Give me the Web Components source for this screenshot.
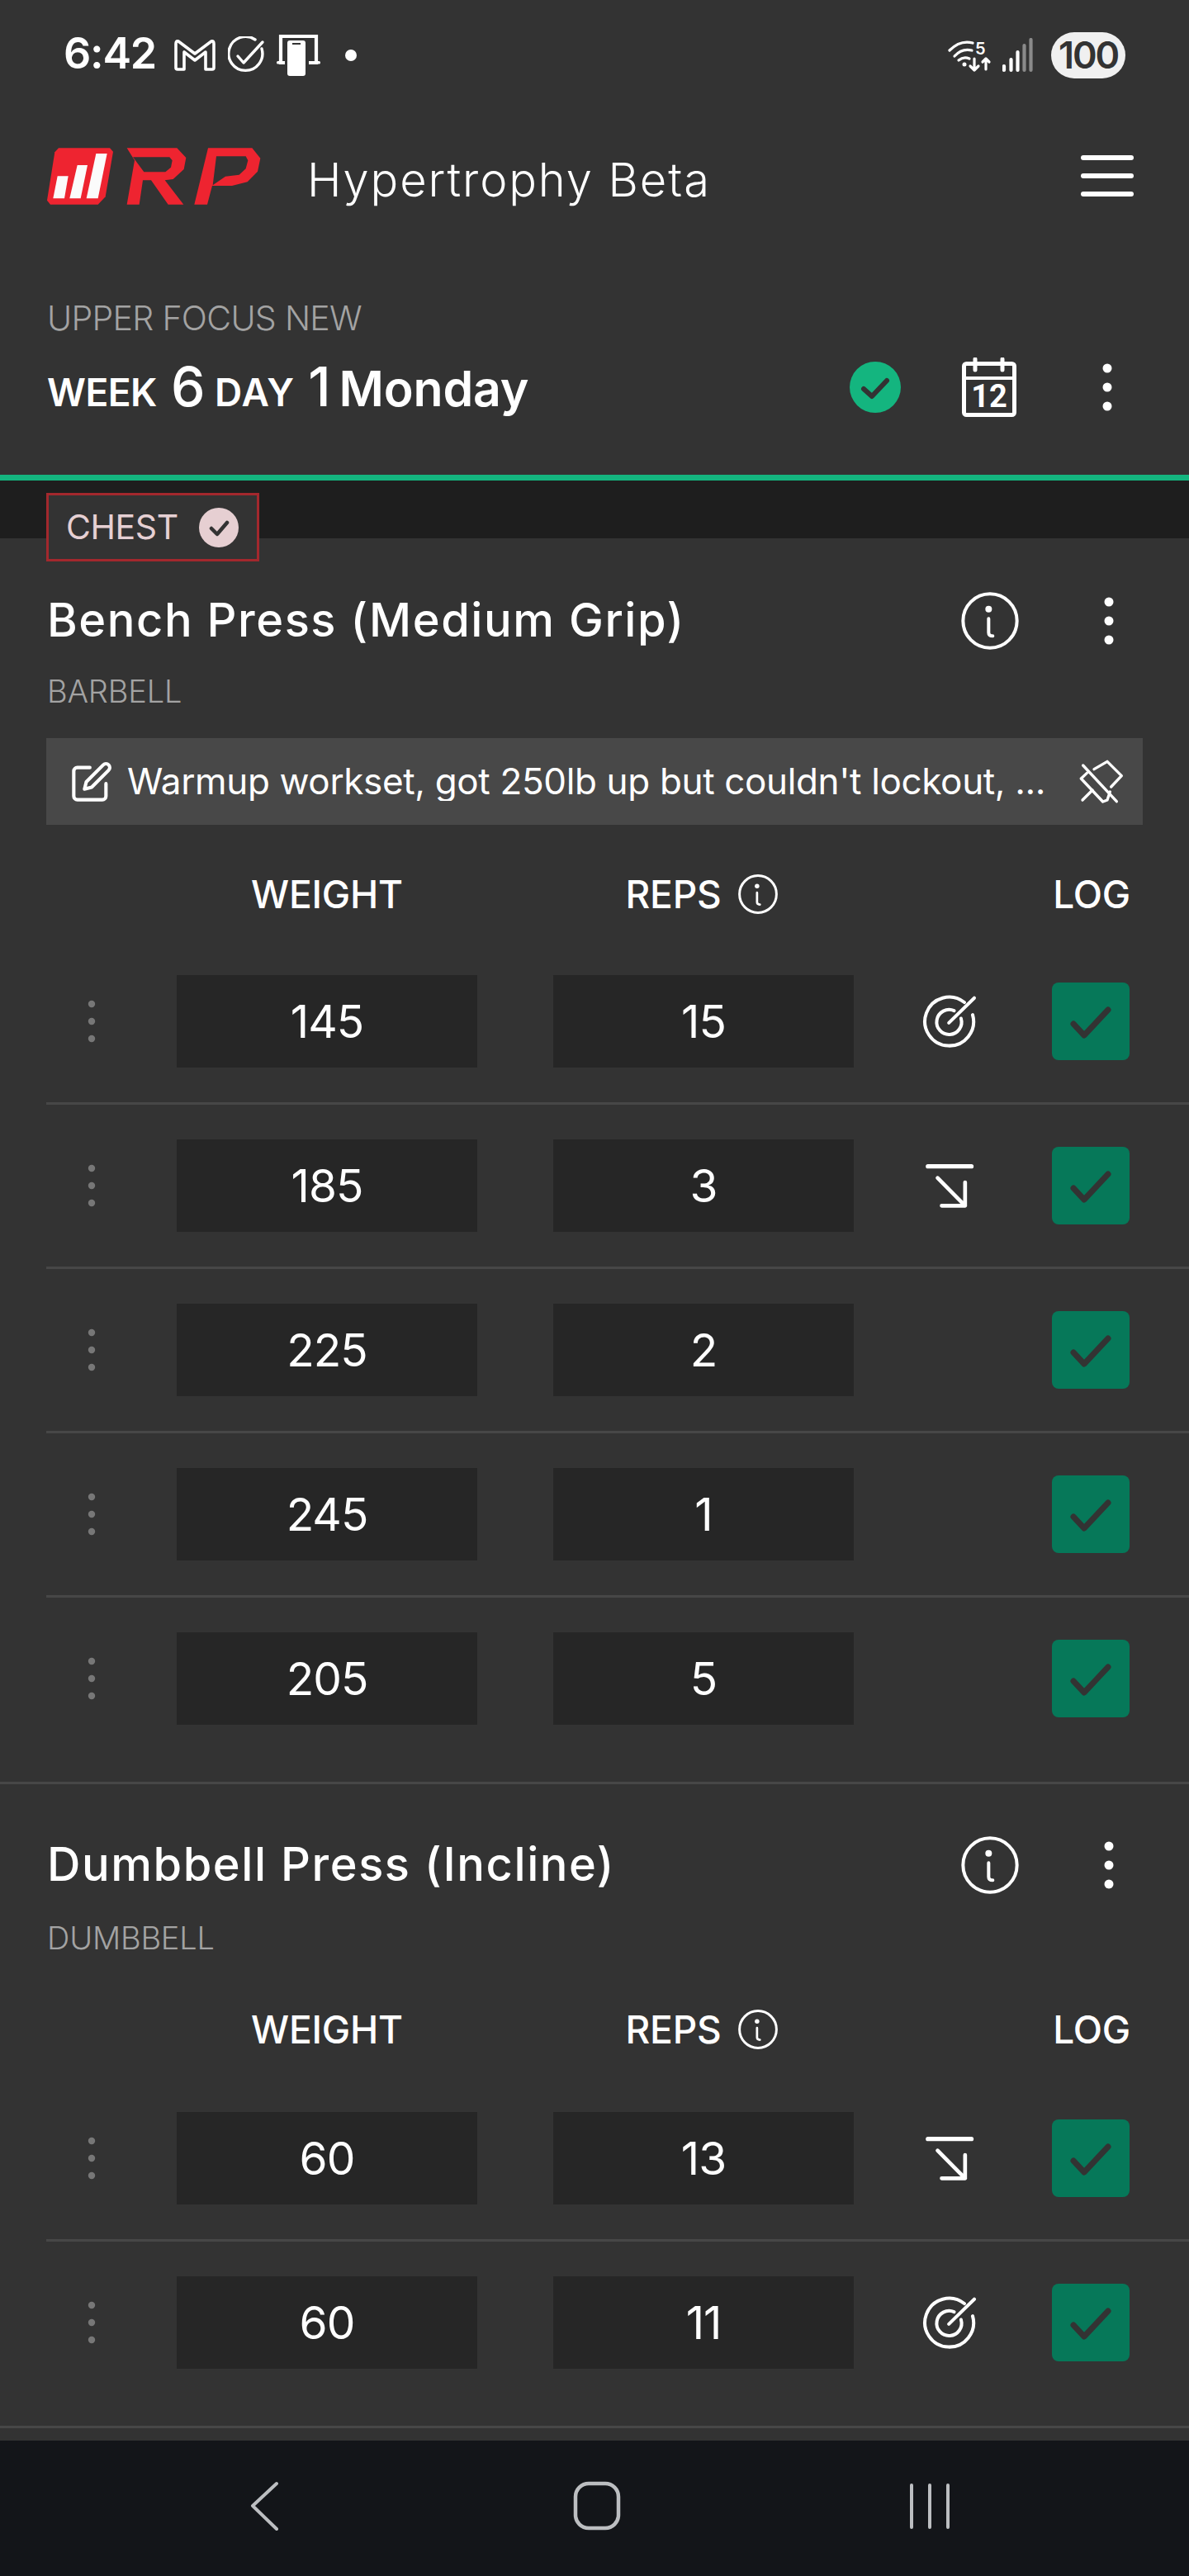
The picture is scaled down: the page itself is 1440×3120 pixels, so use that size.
<!DOCTYPE html>
<html lang="en"><head><meta charset="utf-8"><title>RP Hypertrophy Beta</title>
<style>html,body{margin:0;padding:0;background:#333}body{font-family:Inter,"Noto Sans",sans-serif;color:#fff}</style>
</head><body>
<rp-app>
  <status-bar></status-bar>
  <app-header></app-header>
  <workout-header></workout-header>
  <muscle-band label="CHEST"></muscle-band>
  <exercise-card name="Bench Press (Medium Grip)" kind="BARBELL" style="--top:65px">
    <ex-note slot="note">Warmup workset, got 250lb up but couldn't lockout, ...</ex-note>
    <set-row weight="145" reps="15" cue="target"></set-row>
    <set-row weight="185" reps="3" cue="down"></set-row>
    <set-row weight="225" reps="2"></set-row>
    <set-row weight="245" reps="1"></set-row>
    <set-row weight="205" reps="5" last></set-row>
  </exercise-card>
  <exercise-card name="Dumbbell Press (Incline)" kind="DUMBBELL" style="--top:63px;--kt:28px;--head:61px;--rt:33px">
    <set-row weight="60" reps="13" cue="down"></set-row>
    <set-row weight="60" reps="11" cue="target" last></set-row>
  </exercise-card>
  <nav-bar slot="nav"></nav-bar>
</rp-app>
<script>
const ICONS={
 info:(s)=>`<svg width="${s}" height="${s}" viewBox="0 0 210 210" fill="none" stroke="#fff" stroke-linecap="round"><circle cx="105" cy="105" r="98" stroke-width="${s>60?12:13}"/><circle cx="100" cy="62" r="12" fill="#fff" stroke="none"/><path d="M100 97V148Q100 160 115 160" stroke-width="12"/></svg>`,
 dots:()=>`<svg width="12" height="60" viewBox="0 0 12 60" fill="#fff"><circle cx="6" cy="7" r="5.5"/><circle cx="6" cy="30" r="5.5"/><circle cx="6" cy="53" r="5.5"/></svg>`,
 target:()=>`<svg width="67" height="67" viewBox="470 130 200 200" fill="none" stroke="#fff" stroke-width="12" stroke-linecap="round"><path d="M622 160A88 88 0 1 0 652 205"/><path d="M585 190A45 45 0 1 0 610 218"/><path d="M566 234L658 144"/></svg>`,
 down:()=>`<svg width="67" height="60" viewBox="470 730 200 180" fill="none" stroke="#fff" stroke-linecap="round" stroke-linejoin="round"><path d="M490 750H648" stroke-width="16"/><path d="M525 792L625 893M625 808V893H540" stroke-width="14"/></svg>`,
 edit:()=>`<svg width="52" height="52" viewBox="0 0 24 24" fill="none" stroke="#fff" stroke-width="1.9" stroke-linecap="round" stroke-linejoin="round"><path d="M11 4H4a2 2 0 0 0-2 2v14a2 2 0 0 0 2 2h14a2 2 0 0 0 2-2v-7"/><path d="M18.5 2.5a2.121 2.121 0 0 1 3 3L12 15l-4 1 1-4 9.5-9.5z"/></svg>`,
 pinoff:()=>`<svg width="55" height="55" viewBox="1280 650 165 165" fill="none" stroke="#fff" stroke-width="10" stroke-linecap="round" stroke-linejoin="round"><path d="M1294 674L1416 805"/><path d="M1334 688L1382 660L1434 712L1396 752"/><path d="M1308 702L1287 722L1366 806L1382 800L1392 770"/><path d="M1292 800L1328 764"/></svg>`
};
function def(tag,css,html){
  customElements.define(tag,class extends HTMLElement{
    constructor(){super();this.attachShadow({mode:'open'})}
    connectedCallback(){
      const h=typeof html==='function'?html(this):html;
      this.shadowRoot.innerHTML=`<style>${css}</style>${h}`;
    }
  });
}
def('rp-app',`:host{display:flex;flex-direction:column;width:1440px;height:3120px;overflow:hidden;background:#333;color:#fff;font-family:Inter,"Noto Sans",sans-serif}
.scroll{flex:1;min-height:0;overflow:hidden;display:flex;flex-direction:column}`,
`<div class="scroll"><slot></slot></div><slot name="nav"></slot>`);

def('status-bar',`:host{display:flex;align-items:center;height:130px;flex:none;padding-top:4px;box-sizing:border-box;position:relative}
.time{font:600 52px/1 Inter,sans-serif;letter-spacing:-1.2px;margin-left:77px;width:111px;white-space:nowrap;position:relative;top:-2px}
svg{display:block;flex:none}
.right{margin-left:auto;display:flex;align-items:center;margin-right:77px}
.bat{width:90px;height:56px;border-radius:28px;background:#f0f0f0;color:#333;font:600 45px/56px Inter,sans-serif;letter-spacing:-2.2px;text-align:center;margin-left:21px}`,
`<span class="time">6:42</span>
<svg style="margin-left:23px" width="50" height="42" viewBox="211 46 50 42" fill="none" stroke="#fff" stroke-width="3.6" stroke-linejoin="round"><path d="M216 50L236 65L256 50Q259 49 259 53V82Q259 84 257 84H249V63L236 73L223 63V84H215Q213 84 213 82V53Q213 49 216 50Z"/></svg>
<svg style="margin-left:15px" width="46" height="46" viewBox="276 45 46 46" fill="none" stroke="#fff" stroke-width="3.4" stroke-linecap="round" stroke-linejoin="round"><path d="M309 49A20.500 20.500 0 1 0 317 60"/><path d="M288 69L295 77L318 52"/></svg>
<svg style="margin-left:13px" width="54" height="50" viewBox="335 45 54 50"><path d="M340 47H383V79H340Z" fill="none" stroke="#fff" stroke-width="4.200"/><rect x="335" y="77" width="53" height="3.500" rx="1.500" fill="#fff"/><rect x="345" y="50" width="29" height="45" fill="#333"/><rect x="348" y="52" width="22" height="43" rx="3" fill="#fff"/><rect x="354" y="55" width="10" height="2" fill="#333"/></svg>
<svg style="margin-left:28px" width="16" height="16" viewBox="0 0 16 16"><circle cx="8" cy="8" r="7" fill="#fff"/></svg>
<div class="right">
<svg width="54" height="42" viewBox="1150 47 54 42" fill="none" stroke="#fff" stroke-width="3.200" stroke-linecap="round" stroke-linejoin="round"><path d="M1152 62Q1165 49 1180 53"/><path d="M1158 69Q1167 59 1179 62"/><path d="M1163 74Q1169 69 1176 72"/><circle cx="1170" cy="79" r="2.500" fill="#fff" stroke="none"/><text x="1183" y="67" font-family="Inter,sans-serif" font-weight="600" font-size="20" fill="#fff" stroke="none">5</text><path d="M1182 72V86M1177 81L1182 86L1187 81"/><path d="M1196 85V72M1192 76L1196 72L1200 76"/></svg>
<svg style="margin-left:12px" width="38" height="42" viewBox="1215 46 38 42" fill="none" stroke-width="4.200" stroke-linecap="round"><path d="M1217 80V85M1225.500 72V85M1233.500 63V85" stroke="#fff"/><path d="M1241.500 55V85M1249.500 48V85" stroke="#8a8a8a"/></svg>
<span class="bat">100</span></div>`);

def('app-header',`:host{display:flex;align-items:center;height:166px;flex:none;padding:0 67px 0 57px}
.t{font:300 56px/1 Inter,sans-serif;margin:10px 0 0 55px;white-space:nowrap;letter-spacing:1.9px}
.m{margin-left:auto;display:flex;flex-direction:column;gap:16px}
.m i{display:block;width:64px;height:6px;border-radius:3px;background:#fff}
svg{display:block;flex:none}`,
`<svg width="260" height="69" viewBox="50 55 780 205" aria-label="RP"><g fill="#ee2430"><path d="M92 55H278L290 68L262 232L235 260H62L50 245L78 70Z"/><path fill-rule="evenodd" d="M340 55H522L555 90L547 132L508 168L478 172L546 260H490L428 172H398L385 260H340L368 100ZM362 88H495L505 100L500 125L480 142H402Z"/><path fill-rule="evenodd" d="M635 55H795L825 92L815 140L778 178L722 192H650L632 260H585ZM665 85H772L780 100L772 130L748 152L698 158L652 190Z"/></g><g fill="#fbfbfb"><path d="M88 157H127L113 238H72Z"/><path d="M160 117H197L172 238H132Z"/><path d="M228 75H268L235 238H193Z"/></g></svg>
<span class="t">Hypertrophy Beta</span><div class="m"><i></i><i></i><i></i></div>`);

def('workout-header',`:host{display:flex;height:286px;flex:none;box-sizing:border-box;border-bottom:7px solid #14b57f;padding:70px 93px 0 57px;align-items:flex-start}
.l{flex:1;min-width:0}
.s{font:300 41px/38px Inter,sans-serif;color:#a3a3a3;letter-spacing:-.7px;white-space:nowrap}
.w{display:flex;align-items:baseline;font:600 46px/70px Inter,sans-serif;white-space:nowrap;margin-top:29px;letter-spacing:-.5px}
.y{letter-spacing:1px}
.b{font-size:66px;font-weight:500;margin:0 12px 0 17px}.o{font-size:66px;font-weight:500;margin:0 14px 0 16px;letter-spacing:-4px}.d{font-size:59px;letter-spacing:-.2px}
.i{display:flex;align-items:center;margin-top:67px}
svg{display:block;flex:none}`,
`<div class="l"><div class="s">UPPER FOCUS NEW</div><div class="w"><span>WEEK</span><span class="b">6</span><span class="y">DAY</span><span class="o">1</span><span class="d">Monday</span></div></div>
<div class="i"><svg width="62" height="62" viewBox="0 0 62 62"><circle cx="31" cy="31" r="31" fill="#14b57f"/><path d="M17 33L27 42L45 23" fill="none" stroke="#333" stroke-width="6" stroke-linecap="round" stroke-linejoin="round"/></svg>
<svg style="margin-left:74px" width="66" height="72" viewBox="0 0 66 72"><rect x="2.500" y="7.500" width="61" height="62" rx="3" fill="none" stroke="#fff" stroke-width="5"/><path d="M2 25H64" stroke="#fff" stroke-width="4"/><path d="M16 2V15M49 2V15" stroke="#fff" stroke-width="5" stroke-linecap="round"/><text x="33" y="60" text-anchor="middle" font-family="Roboto,sans-serif" font-weight="700" font-size="38" fill="#fff">12</text></svg>
<span style="margin-left:104px;display:block">${ICONS.dots()}</span></div>`);

def('muscle-band',`:host{display:flex;height:70px;flex:none;background:#1e1e1e;padding-left:56px;align-items:flex-start;position:relative;z-index:1}
.t{display:flex;align-items:center;box-sizing:border-box;width:258px;height:83px;margin-top:15px;border:3px solid #a3282d;background:#333;color:#e6d0d3;padding-left:21px;font:400 41px/1 Inter,sans-serif;letter-spacing:-.4px}
svg{display:block;margin-left:25px}`,
(el)=>`<div class="t"><span>${el.getAttribute('label')}</span><svg width="48" height="48" viewBox="0 0 48 48"><circle cx="24" cy="24" r="24" fill="#e6cfd2"/><path d="M15 25L22 32L34 18" fill="none" stroke="#333" stroke-width="4.500" stroke-linecap="round" stroke-linejoin="round"/></svg></div>`);

def('exercise-card',`:host{display:block;flex:none;border-bottom:3px solid #474747;padding-top:var(--top,63px);padding-bottom:24px}
.h{display:flex;align-items:center;height:70px;padding:0 91px 0 57px}
.n{flex:1;font:500 56px/70px Inter,sans-serif;letter-spacing:1.55px;white-space:nowrap;position:relative;top:-1px}
.ic{display:block;margin-right:103px}.ic svg,.dt svg{display:block}
.k{font:300 38px/50px Inter,sans-serif;color:#a3a3a3;padding-left:57px;margin-top:var(--kt,25px);letter-spacing:-.2px}
set-header{margin-top:var(--head,59px)}
.rows{margin-top:var(--rt,31px)}`,
(el)=>`<div class="h"><span class="n">${el.getAttribute('name')}</span><span class="ic">${ICONS.info(70)}</span><span class="dt">${ICONS.dots()}</span></div>
<div class="k">${el.getAttribute('kind')}</div><slot name="note"></slot><set-header></set-header><div class="rows"><slot></slot></div>`);

def('ex-note',`:host{display:flex;align-items:center;height:105px;margin:32px 56px 0;background:#484848;padding:0 22px 0 29px;box-sizing:border-box;font:400 44px/1 Inter,sans-serif;white-space:nowrap;letter-spacing:-.35px}
svg{display:block;flex:none}.t{margin-left:17px;flex:1;overflow:hidden;padding-bottom:2px}`,
`${ICONS.edit()}<span class="t"><slot></slot></span>${ICONS.pinoff()}`);

def('set-header',`:host{display:flex;align-items:center;height:50px;padding-left:214px;font:500 46px/50px Inter,sans-serif;letter-spacing:-.2px}
.c{width:364px;display:flex;justify-content:center;align-items:center}.r{margin-left:92px;position:relative;left:-2px}
.r svg{display:block;margin-left:21px}.l{margin-left:241px;width:94px;display:flex;justify-content:flex-end}`,
`<span class="c">WEIGHT</span><span class="c r"><span>REPS</span>${ICONS.info(48)}</span><span class="l">LOG</span>`);

def('set-row',`:host{display:flex;align-items:center;margin-left:56px;height:199px;box-sizing:border-box;border-bottom:3px solid #474747}
:host([last]){border-bottom-color:transparent}
.g{width:110px;flex:none;display:flex;justify-content:center;margin-right:48px}
svg{display:block}
.f{width:364px;height:112px;flex:none;background:#262626;display:flex;align-items:center;justify-content:center;font:380 55px/1 Inter,sans-serif;letter-spacing:-1px}
.f+.f{margin-left:92px}
.c{width:232px;flex:none;display:flex;justify-content:center}
.b{width:94px;height:94px;flex:none;margin-left:8px;border-radius:8px;background:#067859;display:flex;align-items:center;justify-content:center}`,
(el)=>{const c=el.getAttribute('cue');return `<span class="g"><svg width="10" height="60" viewBox="0 0 10 60" fill="#777"><circle cx="5" cy="9" r="4.200"/><circle cx="5" cy="30" r="4.200"/><circle cx="5" cy="51" r="4.200"/></svg></span>
<span class="f">${el.getAttribute('weight')}</span><span class="f">${el.getAttribute('reps')}</span><span class="c">${c?ICONS[c]():''}</span>
<span class="b"><svg width="94" height="94" viewBox="0 0 94 94"><path d="M26 50L39 64L68 33" fill="none" stroke="#333" stroke-width="7" stroke-linecap="round" stroke-linejoin="round"/></svg></span>`});

def('nav-bar',`:host{display:flex;flex:none;height:164px;background:#131519;align-items:flex-start;padding-top:49px;box-sizing:border-box}
svg{display:block;flex:none}`,
`<svg style="margin-left:302px" width="38" height="62" viewBox="302 3005 38 62" fill="none" stroke="#bcbec1" stroke-width="4" stroke-linecap="round" stroke-linejoin="round"><path d="M335 3008L306 3035L335 3063"/></svg>
<svg style="margin-left:354px" width="58" height="60" viewBox="694 3006 58 60" fill="none" stroke="#bcbec1" stroke-width="4.500"><rect x="697" y="3009" width="52" height="54" rx="16"/></svg>
<svg style="margin-left:349px" width="50" height="60" viewBox="1100 3005 50 60" fill="none" stroke="#bcbec1" stroke-width="4" stroke-linecap="round"><path d="M1103 3010V3061M1125 3010V3061M1147 3010V3061"/></svg>`);
</script>
</body></html>
